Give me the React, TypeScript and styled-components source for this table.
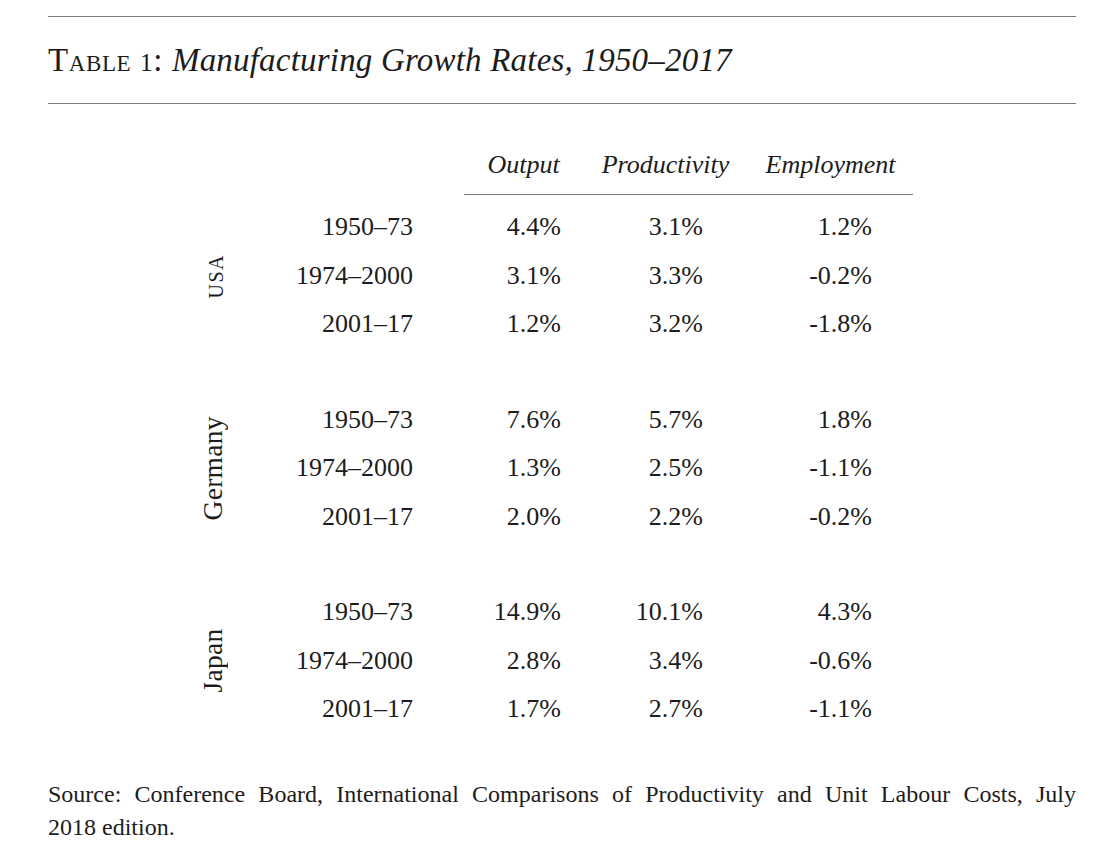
import React from "react";
import styled, { createGlobalStyle } from "styled-components";

interface Row {
  period: string;
  output: string;
  productivity: string;
  employment: string;
}

interface Group {
  country: string;
  smallCaps?: boolean;
  rows: Array<Row>;
}

const groups: Array<Group> = [
  {
    country: "usa",
    smallCaps: true,
    rows: [
      { period: "1950–73", output: "4.4%", productivity: "3.1%", employment: "1.2%" },
      { period: "1974–2000", output: "3.1%", productivity: "3.3%", employment: "-0.2%" },
      { period: "2001–17", output: "1.2%", productivity: "3.2%", employment: "-1.8%" },
    ],
  },
  {
    country: "Germany",
    rows: [
      { period: "1950–73", output: "7.6%", productivity: "5.7%", employment: "1.8%" },
      { period: "1974–2000", output: "1.3%", productivity: "2.5%", employment: "-1.1%" },
      { period: "2001–17", output: "2.0%", productivity: "2.2%", employment: "-0.2%" },
    ],
  },
  {
    country: "Japan",
    rows: [
      { period: "1950–73", output: "14.9%", productivity: "10.1%", employment: "4.3%" },
      { period: "1974–2000", output: "2.8%", productivity: "3.4%", employment: "-0.6%" },
      { period: "2001–17", output: "1.7%", productivity: "2.7%", employment: "-1.1%" },
    ],
  },
];

const GlobalStyle = createGlobalStyle`
  html, body {
    margin: 0;
    padding: 0;
    background: #fff;
  }
  body {
    font-family: "Liberation Serif", "DejaVu Serif", serif;
    color: #1c1c1c;
  }
`;

const Page = styled.main`
  width: 1103px;
  padding: 16px 27px 0 48px;
  box-sizing: border-box;
`;

const Rule = styled.hr`
  all: unset;
  display: block;
  height: 0;
  border-top: 1.5px solid #7a7a7a;
`;

const Caption = styled.h1`
  margin: 0;
  height: 86px;
  display: flex;
  align-items: center;
  box-sizing: border-box;
  font-weight: normal;
  font-size: 33px;
  line-height: 1;
  white-space: nowrap;

  .label {
    font-variant: small-caps;
    letter-spacing: 0.6px;
  }

  .num {
    font-size: 25px;
  }

  em {
    margin-left: 9px;
    letter-spacing: 0.2px;
  }
`;

const Table = styled.div`
  display: grid;
  grid-template-columns: 140px 50px 175px 51px 119px 165px 165px;
  margin-top: 41px;
  font-size: 26px;
`;

const HeadCell = styled.div<{ $col: number }>`
  grid-column: ${({ $col }) => $col};
  grid-row: 1;
  text-align: center;
  font-style: italic;
  height: 49px;
  line-height: 40px;
  border-bottom: 1.5px solid #7a7a7a;
`;

const GroupBlock = styled.div<{ $row: number }>`
  grid-column: 1 / -1;
  grid-row: ${({ $row }) => $row};
  display: grid;
  grid-template-columns: subgrid;
  grid-template-rows: repeat(3, 48.5px);
  margin-top: ${({ $row }) => ($row === 2 ? "8px" : "47px")};
`;

const Country = styled.div<{ $smallCaps?: boolean }>`
  grid-column: 2;
  grid-row: 1 / span 3;
  display: flex;
  align-items: center;
  justify-content: center;
  writing-mode: vertical-rl;
  transform: rotate(180deg);
  font-variant: ${({ $smallCaps }) => ($smallCaps ? "small-caps" : "normal")};
  letter-spacing: ${({ $smallCaps }) => ($smallCaps ? "1.5px" : "0.3px")};
  font-size: ${({ $smallCaps }) => ($smallCaps ? "29px" : "27.5px")};
`;

const Cell = styled.div<{ $col: number; $pad?: number }>`
  grid-column: ${({ $col }) => $col};
  text-align: right;
  padding-right: ${({ $pad }) => $pad ?? 0}px;
  line-height: 48.5px;
  white-space: nowrap;
`;

const Source = styled.p`
  margin: 44px 0 0;
  font-size: 24px;
  line-height: 33px;
  text-align: justify;
`;

const App: React.FC = () => {
  return (
    <Page>
      <GlobalStyle />
      <Rule />
      <Caption>
        <span className="label">
          Table <span className="num">1</span>:
        </span>
        <em>Manufacturing Growth Rates, 1950–2017</em>
      </Caption>
      <Rule />
      <Table>
        <HeadCell $col={5}>Output</HeadCell>
        <HeadCell $col={6}>Productivity</HeadCell>
        <HeadCell $col={7}>Employment</HeadCell>
        {groups.map((group, i) => (
          <GroupBlock key={group.country} $row={i + 2}>
            <Country $smallCaps={group.smallCaps}>{group.country}</Country>
            {group.rows.map((row) => (
              <React.Fragment key={row.period}>
                <Cell $col={3}>{row.period}</Cell>
                <Cell $col={5} $pad={22}>{row.output}</Cell>
                <Cell $col={6} $pad={45}>{row.productivity}</Cell>
                <Cell $col={7} $pad={41}>{row.employment}</Cell>
              </React.Fragment>
            ))}
          </GroupBlock>
        ))}
      </Table>
      <Source>
        Source: Conference Board, International Comparisons of Productivity and Unit
        Labour Costs, July 2018&nbsp;edition.
      </Source>
    </Page>
  );
};

export default App;
